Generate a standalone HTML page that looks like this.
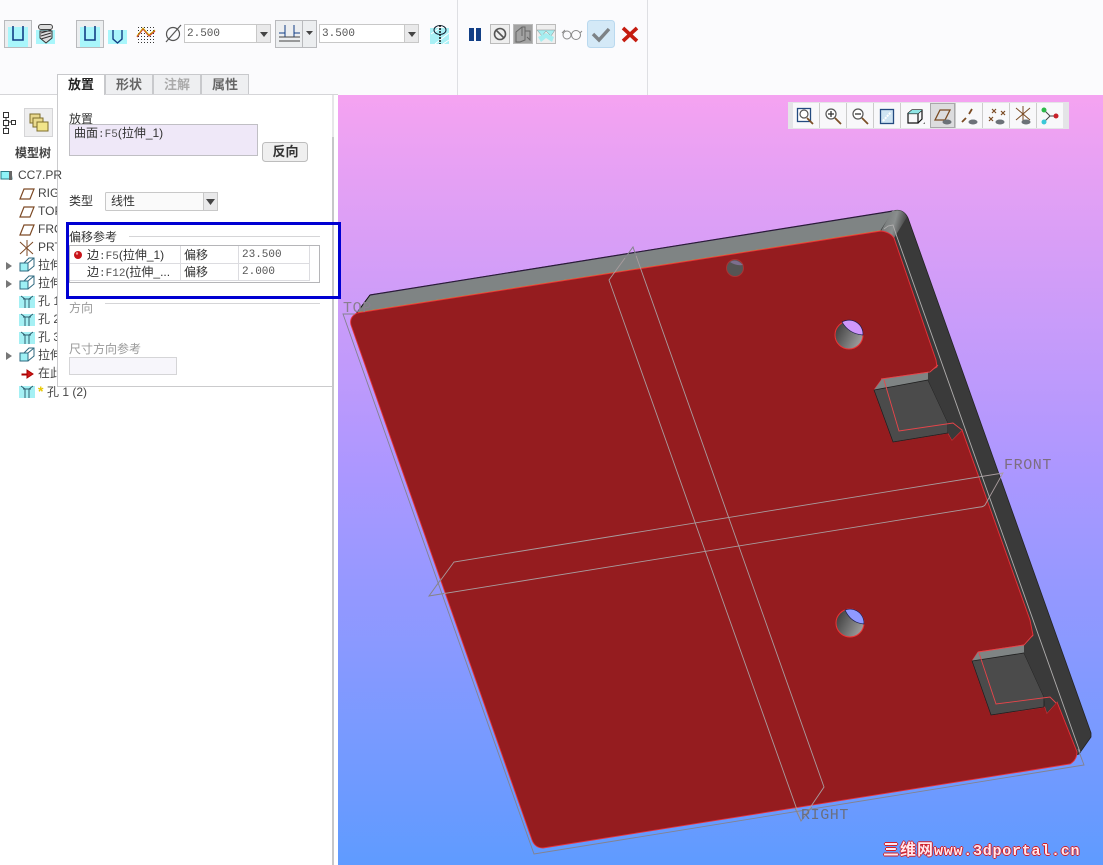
<!DOCTYPE html>
<html><head><meta charset="utf-8"><style>
html,body{margin:0;padding:0;width:1103px;height:865px;overflow:hidden;background:#fff}
body{position:relative;font-family:"Liberation Sans","WenQuanYi Zen Hei","Noto Sans CJK SC",sans-serif;font-size:12px;color:#333}
.t{position:absolute;white-space:nowrap;line-height:14px}
.m{font-family:"Liberation Mono","WenQuanYi Zen Hei",monospace;font-size:11px;color:#555}
.g{color:#999}
.tab{position:absolute;top:74px;height:20px;line-height:20px;text-align:center;font-weight:bold;font-size:13px;background:#eeeff1;border:1px solid #c8c9cc;border-bottom:0;box-sizing:border-box;color:#666}
svg{position:absolute;left:0;top:0}
.lab{position:absolute;font-family:"Liberation Mono",monospace;color:#8a7f90;white-space:nowrap;font-size:15px;letter-spacing:.6px;line-height:16px}
</style></head><body>
<svg width="1103" height="865" viewBox="0 0 1103 865">
<defs>
<linearGradient id="bg" x1="0" y1="95" x2="0" y2="865" gradientUnits="userSpaceOnUse"><stop offset="0" stop-color="#f5a3f1"/><stop offset=".48" stop-color="#ad97ff"/><stop offset="1" stop-color="#5f9bff"/></linearGradient>
<linearGradient id="h" x1="0" y1="0" x2="1" y2=".5"><stop offset="0" stop-color="#333"/><stop offset="1" stop-color="#999"/></linearGradient>
<linearGradient id="c" x1="0" y1="0" x2="1" y2=".3"><stop offset="0" stop-color="#6e7272"/><stop offset=".6" stop-color="#8a8e8e"/><stop offset="1" stop-color="#444"/></linearGradient>
<pattern id="dots" width="3" height="3" patternUnits="userSpaceOnUse"><rect width="1" height="1" fill="#333"/></pattern>
<g id="hole"><circle r="14" fill="url(#h)" stroke="#e33" stroke-width="1"/></g>
</defs>
<rect width="1103" height="95" fill="#fbfbfd"/>
<rect x="338" y="95" width="765" height="770" fill="url(#bg)"/>
<!-- toolbar dividers -->
<path d="M457.5 0V95M647.5 0V95" stroke="#dedfe3"/>
<!-- toolbar icons -->
<g fill="none">
<rect x="4.5" y="20.5" width="27" height="27" fill="#eceef0" stroke="#b9babd"/><rect x="8" y="27" width="20" height="20" fill="#a9f6fb"/><path d="M13 26V40H23V26" stroke="#123f86" stroke-width="1.6"/>
<rect x="36" y="30" width="19" height="14" fill="#a9f6fb"/><path d="M40 31V38L46 43L52 38V31Z" fill="#ddd" stroke="#333"/><path d="M41 33L51 30M41 36L51 33M41 39L51 36" stroke="#333"/><rect x="38.500" y="24.500" width="14" height="5" rx="2.500" fill="#ddd" stroke="#444"/>
<rect x="76.500" y="20.500" width="27" height="27" fill="#eceef0" stroke="#b9babd"/><rect x="80" y="27" width="20" height="20" fill="#a9f6fb"/><path d="M85 26V40H95V26" stroke="#123f86" stroke-width="1.6"/>
<rect x="108" y="30" width="19" height="14" fill="#a9f6fb"/><path d="M113 30V39L117.500 43L122 39V30" stroke="#123f86" stroke-width="1.4"/>
<rect x="136" y="25" width="20" height="19" fill="url(#dots)"/><path d="M137 37L143 29L149 36L155 31" stroke="#c33" stroke-width="1.200"/><path d="M137 36L143 28L149 35L155 30" stroke="#c9a000"/>
<circle cx="173" cy="34" r="6.500" stroke="#555" stroke-width="1.200"/><path d="M166 42L181 25" stroke="#555" stroke-width="1.200"/>
<rect x="184.500" y="24.500" width="86" height="18" fill="#fff" stroke="#c8c8c8"/><rect x="256.500" y="24.500" width="14" height="18" fill="#e9e9ea" stroke="#c8c8c8"/><path d="M260 32H268L264 37Z" fill="#444"/>
<rect x="275.500" y="20.500" width="27" height="27" fill="#eceef0" stroke="#b9babd"/><rect x="302.500" y="20.500" width="14" height="27" fill="#eceef0" stroke="#b9babd"/><path d="M306 31H313L309.500 35Z" fill="#444"/><path d="M285 25V37H294V25M279 33H285M294 33H300" stroke="#123f86"/><path d="M279 37H300M279 41H300" stroke="#444"/>
<rect x="319.500" y="24.500" width="98" height="18" fill="#fff" stroke="#c8c8c8"/><rect x="404.500" y="24.500" width="14" height="18" fill="#e9e9ea" stroke="#c8c8c8"/><path d="M408 32H416L412 37Z" fill="#444"/>
<rect x="430" y="28" width="19" height="16" fill="#a9f0f5"/><path d="M431 34L440 28M435 44L449 33M443 44L449 40" stroke="#fff"/><ellipse cx="440" cy="30" rx="6" ry="4.500" stroke="#123" stroke-width="1"/><path d="M440 25V44" stroke="#111" stroke-width="1.500" stroke-dasharray="2 1"/>
<rect x="469" y="28" width="5" height="13" fill="#123f86"/><rect x="476" y="28" width="5" height="13" fill="#123f86"/>
<rect x="490.500" y="24.500" width="19" height="19" fill="#eee" stroke="#bbb"/><circle cx="500" cy="34" r="5.500" stroke="#555" stroke-width="1.600"/><path d="M496 30L504 38" stroke="#555" stroke-width="1.600"/>
<rect x="513.500" y="24.500" width="19" height="19" fill="#a3a3a3" stroke="#bbb"/><path d="M516 32L522 27H525V40L520 42H516ZM522 27V36M525 31H530V40L527 37" stroke="#666"/>
<rect x="536.500" y="24.500" width="19" height="19" fill="#eee" stroke="#bbb"/><path d="M537 30H555L551 36L546 31L542 36Z" fill="#a6eef0" stroke="#888" stroke-width=".5"/><path d="M538 37L546 33L554 37L552 42L546 38L541 42Z" fill="#a6eef0"/>
<circle cx="567" cy="35" r="4" stroke="#888"/><circle cx="576" cy="35" r="4.500" stroke="#888"/><path d="M571 34L572 34M562 33L565 30M580 33L582 31" stroke="#888"/>
<rect x="587.500" y="20.500" width="27" height="27" rx="3" fill="#d4e9f7" stroke="#bad9ef"/><path d="M593 34L599 40L609 29" stroke="#7d8286" stroke-width="3.400"/>
<path d="M623 28L637 41M637 28L623 41" stroke="#c51c10" stroke-width="3.600"/>
</g>
<!-- 3D scene -->
<path d="M370 295L893 211Q903 208 908 218L1091 733V737L1079 754L1060 760L900 400L880 233L356 314Z" fill="#3a3a3a" stroke="#222" stroke-width=".8"/>
<path d="M370 295L893 211L880 231L356 314Z" fill="#7f8484"/>
<path d="M370 295L893 211" stroke="#2a1a3a" stroke-width="1.200"/>
<path d="M892 211Q903 208 907 217L894 238Q890 232 881 231Z" fill="url(#c)"/>
<path d="M357 313L881 231" stroke="#dc9a1e" stroke-width="1.400"/>
<path d="M370 295L356 314" stroke="#111"/>
<path d="M357 313L881 231Q890 232 894 238L936 360L937 367L930 372L882 379L874 390L893 442L948 433L952 440L959 433L962 430L1030 620L1033 635L1030 643L1024 645L978 652L972 661L991 715L1045 707L1047 713L1056 703L1057 702L1077 752Q1077 760 1070 764L543 848Q535 848 532 840L351 325Q349 317 357 313Z" fill="#951c1f" stroke="#e8323a" stroke-width=".9"/>
<!-- pocket 1 -->
<path d="M874 390L882 379L928 372L928 380Z" fill="#7f8484"/>
<path d="M874 390L928 380L948 423V433L893 442Z" fill="#4b4b4b" stroke="#1f1f1f" stroke-width=".8"/>
<path d="M928 372L938 367L962 430L952 440L948 433V423L928 380Z" fill="#3a3a3a"/>
<path d="M881 379L930 372L938 365M884 380L899 431L953 423L962 430" stroke="#e8454a" fill="none" stroke-width=".9"/>
<!-- pocket 2 -->
<path d="M972 661L978 652L1024 645L1024 653Z" fill="#7f8484"/>
<path d="M972 661L1024 653L1044 697V707L991 715Z" fill="#4b4b4b" stroke="#1f1f1f" stroke-width=".8"/>
<path d="M1024 645L1033 636L1057 702L1047 713L1045 707L1044 697L1024 653Z" fill="#3a3a3a"/>
<path d="M978 652L1024 645L1033 635M979 653L996 704L1050 697L1056 703" stroke="#e8454a" fill="none" stroke-width=".9"/>
<!-- holes -->
<circle cx="735" cy="268" r="8.500" fill="#555" stroke="#a33"/><path d="M730 262Q736 258 743 265Q736 266 730 262Z" fill="#7d6e8e"/>
<use href="#hole" x="849" y="335"/><path d="M842 322A14 14 0 0 1 863 335Q849 334 842 322Z" fill="#cf97fb" stroke="#1a1a4a" stroke-width=".7"/>
<use href="#hole" x="850" y="623"/><path d="M845 610A14 14 0 0 1 864 624Q851 623 845 610Z" fill="#8f99ff" stroke="#1a1a4a" stroke-width=".7"/>
<!-- datum planes -->
<g fill="none" stroke="#a99c9e" stroke-width=".9">
<path d="M609 280L633 247L824 787L801 821L609 280Z"/>
<path d="M429 596L454 562L1003 473L985 505Q983 507 980 507Z"/>
<path d="M884 229L888 226L893 225L897 237L1080 752" stroke="#b0aeae"/>
</g>
<g fill="none" stroke="#83828e" stroke-width=".9">
<path d="M355 314H343L534 854L1084 765L1078 749"/>
<path d="M444 593.500L429 596L441 579M625 258L633 247L636 256M795 808L801 821L812 807"/>
</g>
<!-- left panel -->
<rect x="0" y="95" width="338" height="770" fill="#fff"/>
<rect x="332" y="137" width="2" height="728" fill="#c6c7c9"/>
<rect x="332" y="95" width="2" height="42" fill="#e6e6e8"/>
<g fill="none">
<rect x="24.500" y="108.500" width="28" height="28" fill="#eeeeef" stroke="#d5d5d7"/>
<path d="M3.500 112.500h5v5h-5zM3.500 120.500h5v5h-5zM3.500 128.500h5v5h-5zM11.500 120.500h4v4h-4zM6 118v2M6 126v2M9 122h2" stroke="#333"/>
<rect x="30" y="114" width="10" height="9" fill="#e8d78c" stroke="#7d6d2c"/><rect x="33" y="118" width="10" height="9" fill="#eadb8e" stroke="#7d6d2c"/><rect x="37" y="122" width="11" height="9" fill="#f2e58a" stroke="#7d6d2c"/>
<path d="M1 171.500H11L12 179H1Z" fill="#8ff4f8" stroke="#2a7b86"/><rect x="9" y="171" width="3" height="9" fill="#666"/>
<g stroke="#7d4a26" stroke-width="1.200"><path d="M20 199L24 189H34L30 199Z"/><path d="M20 217L24 207H34L30 217Z"/><path d="M20 235L24 225H34L30 235Z"/></g>
<path d="M20 242L33 254M33 242L20 254M27 240V256" stroke="#7d4a26"/>
<path d="M6 262L12 266L6 270Z M6 280L12 284L6 288Z M6 352L12 356L6 360Z" fill="#777"/>
<g stroke="#2f6a80"><path d="M20 263h8v8h-8z" fill="#9ef0f5"/><path d="M28 263L34 258M24 263L29 258H34V266L28 271"/>
<path d="M20 281h8v8h-8z" fill="#9ef0f5"/><path d="M28 281L34 276M24 281L29 276H34V284L28 289"/>
<path d="M20 353h8v8h-8z" fill="#9ef0f5"/><path d="M28 353L34 348M24 353L29 348H34V356L28 361"/></g>
<g id="hl"><rect x="19" y="296" width="16" height="12" fill="#a5f0f4"/><path d="M21 296L25 299V308M33 296L29 299V308M23 299H31" stroke="#2f5f70"/></g>
<use href="#hl" y="18"/><use href="#hl" y="36"/><use href="#hl" y="90"/>
<path d="M22 374H27V370L33 374L27 378V375H22Z" fill="#d01818" stroke="#a00"/>
</g>
<rect x="57" y="94" width="275" height="292" fill="#fff"/>
<path d="M57.500 95V386.500H332" fill="none" stroke="#cbcbcd"/>
<path d="M0 94.500H338" stroke="#d5d5d8"/>
<rect x="69.500" y="124.500" width="188" height="31" fill="#efe8f8" stroke="#c0bfc4"/>
<rect x="262.500" y="142.500" width="45" height="19" rx="3" fill="#efefef" stroke="#bdbdbd"/>
<rect x="105.500" y="192.500" width="112" height="18" rx="1" fill="#fafafa" stroke="#c8c8c8"/><rect x="203.500" y="192.500" width="14" height="18" fill="#e9e9ea" stroke="#c8c8c8"/><path d="M206 199H215L210.500 205Z" fill="#444"/>
<path d="M129 236.500H320M105 303.500H320" stroke="#d5d5d7"/>
<rect x="69.500" y="245.500" width="250" height="37" fill="#fff" stroke="#b5b5b8"/>
<path d="M70 263.500H310M70 280.500H310M180.500 246V281M238.500 246V281M309.500 246V281" stroke="#dcdce0"/>
<circle cx="78" cy="255" r="4" fill="#c8141a"/><circle cx="77" cy="253.500" r="1.200" fill="#f0a0a0"/>
<rect x="69.500" y="357.500" width="107" height="17" fill="#f7f6fb" stroke="#d5d5d7"/>
<rect x="67.500" y="223.500" width="272" height="74" fill="none" stroke="#0000d2" stroke-width="3"/>
<rect x="788" y="102" width="281" height="27" fill="#e4e4e7"/><rect x="793" y="103" width="270" height="25" fill="#f8f8fa"/>
<path d="M819.500 103V128M846.500 103V128M873.500 103V128M900.500 103V128M955.500 103V128M982.500 103V128M1009.500 103V128M1036.500 103V128" stroke="#ccc"/>
<!-- view toolbar -->
<g fill="none">
<rect x="797.500" y="108.500" width="13" height="13" fill="#fff" stroke="#234a80" stroke-width="1.300"/><circle cx="804" cy="114" r="4" stroke="#555" stroke-width="1.200"/><path d="M807 118L813 124" stroke="#7a4f26" stroke-width="1.800"/>
<circle cx="831" cy="114" r="5" fill="#fff" stroke="#555" stroke-width="1.200"/><path d="M828 114H834M831 111V117" stroke="#333" stroke-width="1.300"/><path d="M835 118L841 124" stroke="#7a4f26" stroke-width="1.800"/>
<circle cx="858" cy="114" r="5" fill="#fff" stroke="#555" stroke-width="1.200"/><path d="M855 114H861" stroke="#333" stroke-width="1.300"/><path d="M862 118L868 124" stroke="#7a4f26" stroke-width="1.800"/>
<rect x="880.500" y="109.500" width="13" height="14" fill="#cfe4f3" stroke="#234a80" stroke-width="1.300"/><path d="M883 121L891 112" stroke="#fff" stroke-width="2" stroke-dasharray="2 1"/>
<path d="M908 113.500H918V123H908ZM908 113.500L912 110H922V119L918 123M918 113.500L922 110" stroke="#111" stroke-width="1.200"/><path d="M912 110H922L918 113.500H908Z" fill="#8fe5e5"/><path d="M923 124h2v-2z" fill="#777"/>
<rect x="930.500" y="103.500" width="24" height="24" fill="#dcdcde" stroke="#a8a8aa"/><path d="M935 120L940 110H950L945 120Z" stroke="#7a4a22" stroke-width="1.300"/><ellipse cx="947" cy="122" rx="4.500" ry="2.500" fill="#6c7278"/>
<path d="M962 122L966 118M969 114L972 109" stroke="#7a4a22" stroke-width="1.800"/><ellipse cx="973" cy="122" rx="4.500" ry="2.500" fill="#6c7278"/>
<path d="M992 109L996 113M996 109L992 113M1001 111L1005 115M1005 111L1001 115M989 117L993 121M993 117L989 121" stroke="#7a4a22" stroke-width="1.200"/><ellipse cx="1000" cy="122" rx="4.500" ry="2.500" fill="#6c7278"/>
<path d="M1016 108L1030 120M1030 108L1016 120M1023 106V122" stroke="#7a4a22"/><ellipse cx="1026" cy="122" rx="4.500" ry="2.500" fill="#6c7278"/>
<path d="M1044 110L1050 116H1056M1044 122L1050 116" stroke="#444"/><circle cx="1044" cy="110" r="2.500" fill="#2db84a"/><circle cx="1044" cy="122" r="2.500" fill="#3bc8d8"/><circle cx="1056" cy="116" r="2.500" fill="#c8202a"/>
</g>
</svg>

<div class="tab" style="left:57px;width:48px;background:#fff;color:#222;height:21px">放置</div>
<div class="tab" style="left:105px;width:48px">形状</div>
<div class="tab" style="left:153px;width:48px;color:#aaa">注解</div>
<div class="tab" style="left:201px;width:48px">属性</div>

<div class="t m" style="left:187px;top:27px">2.500</div>
<div class="t m" style="left:322px;top:27px">3.500</div>

<div class="t" style="left:15px;top:146px;font-weight:bold;color:#444">模型树</div>
<div class="t" style="left:18px;top:168px;color:#444">CC7.PR</div>
<div class="t" style="left:38px;top:186px;color:#444;width:19px;overflow:hidden">RIGHT</div>
<div class="t" style="left:38px;top:204px;color:#444;width:19px;overflow:hidden">TOP</div>
<div class="t" style="left:38px;top:222px;color:#444;width:19px;overflow:hidden">FRONT</div>
<div class="t" style="left:38px;top:240px;color:#444;width:19px;overflow:hidden">PRT_</div>
<div class="t" style="left:38px;top:258px;color:#444;width:19px;overflow:hidden">拉伸</div>
<div class="t" style="left:38px;top:276px;color:#444;width:19px;overflow:hidden">拉伸</div>
<div class="t" style="left:38px;top:294px;color:#444;width:19px;overflow:hidden">孔 1</div>
<div class="t" style="left:38px;top:312px;color:#444;width:19px;overflow:hidden">孔 2</div>
<div class="t" style="left:38px;top:330px;color:#444;width:19px;overflow:hidden">孔 3</div>
<div class="t" style="left:38px;top:348px;color:#444;width:19px;overflow:hidden">拉伸</div>
<div class="t" style="left:38px;top:366px;color:#444;width:19px;overflow:hidden">在此</div>
<div class="t" style="left:38px;top:384px;color:#444"><span style="display:inline-block;width:9px;color:#e8c800;font-weight:bold;font-size:14px">*</span>孔 1 (2)</div>

<div class="t" style="left:69px;top:112px">放置</div>
<div class="t" style="left:74px;top:126px">曲面<span class="m">:F5</span>(拉伸_1)</div>
<div class="t" style="left:263px;top:145px;width:45px;text-align:center;font-weight:bold;font-size:13px">反向</div>
<div class="t" style="left:69px;top:194px">类型</div>
<div class="t" style="left:111px;top:194px">线性</div>
<div class="t" style="left:69px;top:230px">偏移参考</div>
<div class="t" style="left:87px;top:248px">边<span class="m">:F5</span>(拉伸_1)</div>
<div class="t" style="left:184px;top:248px">偏移</div>
<div class="t m" style="left:242px;top:248px">23.500</div>
<div class="t" style="left:87px;top:265px">边<span class="m">:F12</span>(拉伸_...</div>
<div class="t" style="left:184px;top:265px">偏移</div>
<div class="t m" style="left:242px;top:265px">2.000</div>
<div class="t g" style="left:69px;top:301px">方向</div>
<div class="t g" style="left:69px;top:342px">尺寸方向参考</div>

<div class="lab" style="left:343px;top:301px">TOP</div>
<div class="lab" style="left:1004px;top:458px;color:#7d6e80">FRONT</div>
<div class="lab" style="left:801px;top:808px;color:#6a6f80">RIGHT</div>
<div class="t" style="left:883px;top:844px;font-weight:bold;font-size:16px;color:#ffe8ee;text-shadow:1px 0 #d0202a,-1px 0 #d0202a,0 1px #d0202a,0 -1px #d0202a"><span style="letter-spacing:1px">三维网</span><span style="font-family:'Liberation Mono',monospace;font-size:15px;letter-spacing:.75px">www.3dportal.cn</span></div>
</body></html>
